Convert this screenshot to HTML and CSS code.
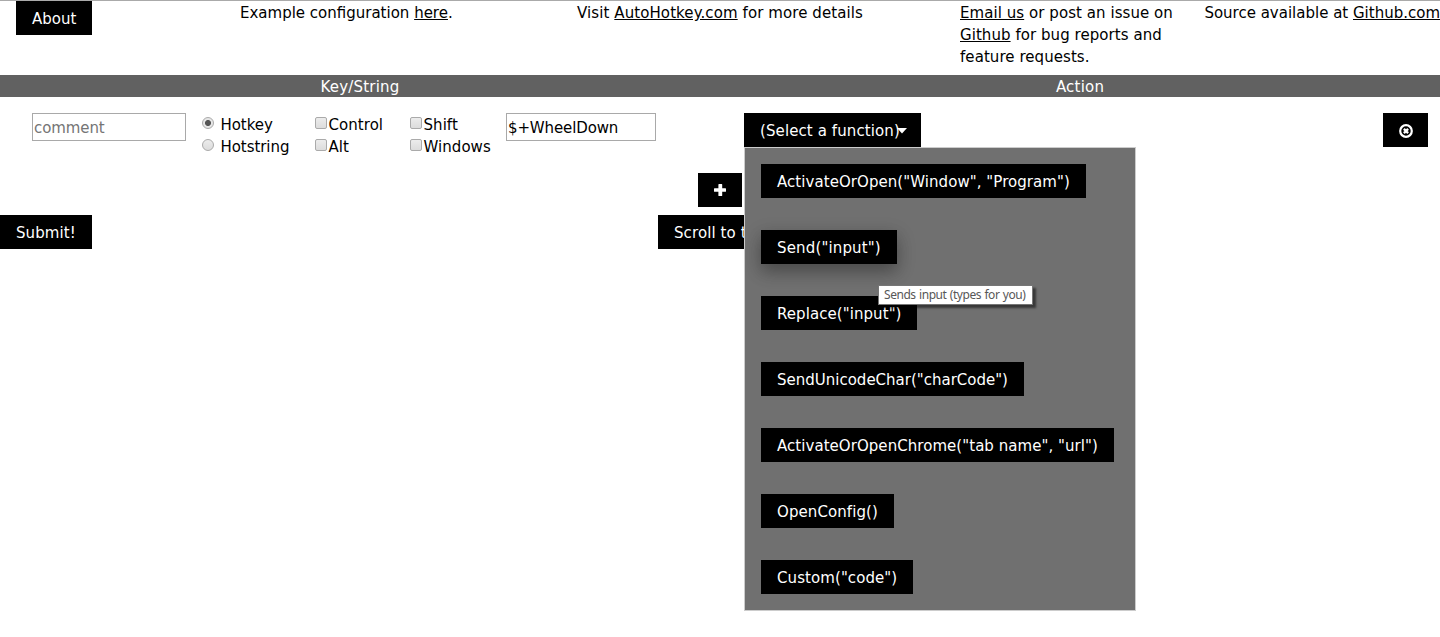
FILE: index.html
```
<!DOCTYPE html>
<html lang="en">
<head>
<meta charset="utf-8">
<title>AutoHotkey Generator</title>
<link rel="stylesheet" href="styles.css">
</head>
<body>
<header class="top">
  <div class="top-about"><button class="btn w-about"><span>About</span></button></div>
  <div class="top-item"><span>Example configuration <a>here</a>.</span></div>
  <div class="top-item center"><span>Visit <a>AutoHotkey.com</a> for more details</span></div>
  <div class="top-item report"><span><a>Email us</a> or post an issue on</span><br><span><a>Github</a> for bug reports and</span><br><span>feature requests.</span></div>
  <div class="top-item right"><span>Source available at <a>Github.com</a></span></div>
</header>
<div class="heads"><div><span>Key/String</span></div><div><span>Action</span></div></div>
<main>
  <div class="row">
    <input class="field comment" type="text" placeholder="comment">
    <div class="group kinds">
      <label><i class="radio on"></i><span>Hotkey</span></label>
      <label><i class="radio"></i><span>Hotstring</span></label>
    </div>
    <div class="group mods">
      <label><i class="check"></i><span>Control</span></label>
      <label><i class="check"></i><span>Alt</span></label>
    </div>
    <div class="group mods last">
      <label><i class="check"></i><span>Shift</span></label>
      <label><i class="check"></i><span>Windows</span></label>
    </div>
    <input class="field key" type="text" value="$+WheelDown">
    <div class="select">
      <button class="btn w-select"><span>(Select a function)</span><svg class="caret" width="10" height="6" viewBox="0 0 10 6"><path d="M0 0h10L5 5.5z" fill="#fff"/></svg></button>
      <div class="menu">
        <button class="btn w-1"><span>ActivateOrOpen("Window", "Program")</span></button>
        <button class="btn w-2 hover"><span>Send("input")</span></button>
        <button class="btn w-3"><span>Replace("input")</span></button>
        <button class="btn w-4"><span>SendUnicodeChar("charCode")</span></button>
        <button class="btn w-5"><span>ActivateOrOpenChrome("tab name", "url")</span></button>
        <button class="btn w-6"><span>OpenConfig()</span></button>
        <button class="btn w-7"><span>Custom("code")</span></button>
        <div class="tip">Sends input (types for you)</div>
      </div>
    </div>
    <button class="btn remove"><svg width="14" height="14" viewBox="0 0 14 14" fill="none" stroke="#fff"><circle cx="7" cy="7" r="5.8" stroke-width="2.2"/><path d="M4.9 4.9l4.2 4.2M9.1 4.9L4.9 9.1" stroke-width="2.4"/></svg></button>
  </div>
  <div class="add-row"><button class="btn add"><svg width="12" height="12" viewBox="0 0 12 12"><path d="M5 0h2.6q.6 0 .6.6v3.6h3.2q.6 0 .6.6v2.4q0 .6-.6.6H8.200v3.600q0 .6-.6.6H5q-.6 0-.6-.6V7.800H.6q-.6 0-.6-.6V4.800q0-.6.6-.6h3.800V.6q0-.6.6-.6z" fill="#fff"/></svg></button></div>
  <div class="foot"><button class="btn w-submit"><span>Submit!</span></button><button class="btn w-scroll"><span>Scroll to top</span></button></div>
</main>
</body>
</html>
```
FILE: styles.css
```
* { box-sizing: border-box; }
body { margin: 0; height: 637px; overflow: hidden; background: #fff; color: #000; font: 15px/22px "DejaVu Sans", sans-serif; border-top: 1px solid #aaa; }
a { text-decoration: underline; }
span { white-space: nowrap; }
.top { display: grid; grid-template-columns: 240px 240px 480px 240px 240px; height: 74px; }
.top-about { padding-left: 16px; }
.top-item { padding-top: 1px; }
.center { text-align: center; letter-spacing: 0.09px; }
.report { letter-spacing: 0.06px; }
.right { text-align: right; }
.btn { display: flex; align-items: center; height: 34px; padding: 1px 0 0 16px; border: 0; background: #000; color: #fff; font: inherit; }
.heads { display: grid; grid-template-columns: 1fr 1fr; height: 22px; padding-top: 1px; background: #616161; color: #fff; text-align: center; letter-spacing: 0.2px; }
.row { display: flex; align-items: flex-start; height: 76px; padding: 16px 12px 0 32px; }
.field { height: 28px; border: 1px solid #a9a9a9; padding: 2px 1px 1px; font: inherit; color: #000; background: #fff; }
.field::placeholder { color: #757575; opacity: 1; }
.comment { width: 154px; letter-spacing: -0.1px; }
.key { width: 150px; margin-right: 88px; letter-spacing: -0.12px; }
.group { display: flex; flex-direction: column; }
.group label { display: flex; height: 22px; padding-top: 1px; }
.kinds { width: 113px; margin-left: 16px; letter-spacing: -0.06px; }
.mods { width: 95px; letter-spacing: 0.05px; }
.last { width: 96px; }
.radio, .check { flex: none; width: 12px; height: 12px; margin-top: 3px; border: 1px solid #aaa; background: linear-gradient(#ececec, #dcdcdc); }
.check { border-radius: 2px; margin-right: 1.5px; }
.radio { border-radius: 50%; margin-right: 6.5px; }
.radio.on { background: radial-gradient(circle, #555 0 2.6px, #e6e6e6 3.4px); }
.select { position: relative; }
.caret { margin-left: -3px; flex: none; }
.menu { position: absolute; left: 0; top: 34px; z-index: 2; width: 392px; height: 464px; padding: 16px; display: flex; flex-direction: column; align-items: flex-start; gap: 32px; background: #707070; border: 1px solid #ccc; }
.hover { box-shadow: 0 8px 16px rgba(0,0,0,.2), 0 6px 20px rgba(0,0,0,.19); }
.tip { position: absolute; left: 133px; top: 137px; width: 155px; height: 20px; border: 1px solid #767676; background: #fff; color: #575757; font: 12px/18px "Noto Sans", sans-serif; letter-spacing: -0.45px; word-spacing: 0.7px; padding-left: 5px; white-space: nowrap; box-shadow: 3px 3px 2px rgba(0,0,0,.5); }
.remove { width: 45px; margin-left: auto; }
.add-row { display: flex; justify-content: center; }
.add { width: 44px; padding-top: 0; }
.foot { display: grid; grid-template-columns: 1fr auto 1fr; margin-top: 8px; }
.w-about { width: 76px; }
.w-submit { width: 92px; justify-self: start; letter-spacing: 0.1px; }
.w-scroll { width: 124px; letter-spacing: 0.1px; }
.w-select { width: 177px; letter-spacing: 0.1px; }
.w-1 { width: 325px; letter-spacing: 0.06px; }
.w-2 { width: 136px; letter-spacing: 0.15px; }
.w-3 { width: 156px; letter-spacing: 0.07px; }
.w-4 { width: 263px; }
.w-5 { width: 353px; letter-spacing: 0.05px; }
.w-6 { width: 133px; letter-spacing: 0.09px; }
.w-7 { width: 152px; letter-spacing: 0.08px; }
```
